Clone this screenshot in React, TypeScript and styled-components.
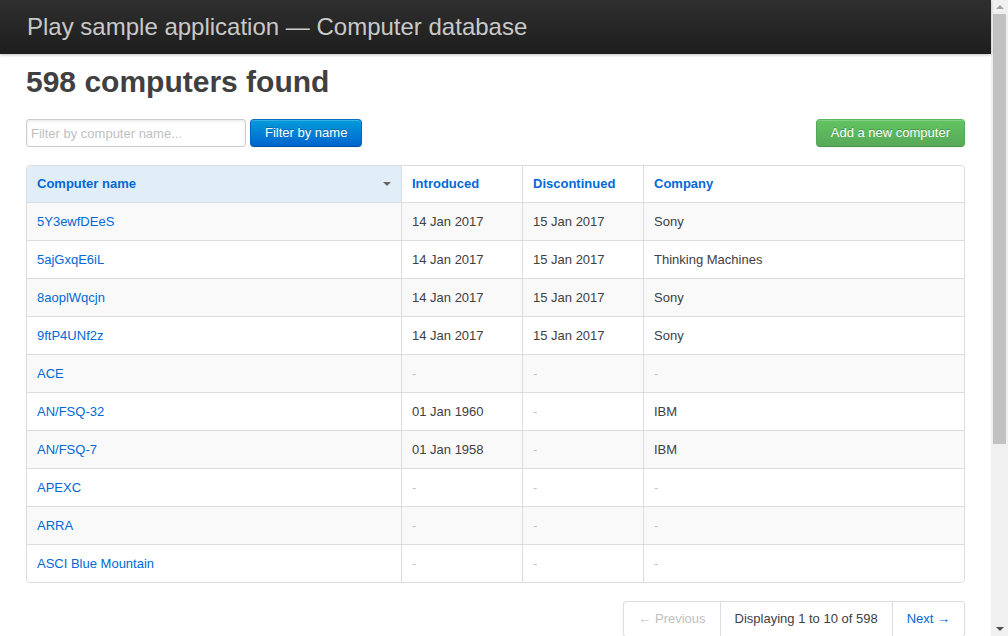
import React from "react";
import styled, { createGlobalStyle } from "styled-components";

const Global = createGlobalStyle`
  html, body { margin: 0; padding: 0; overflow: hidden; }
  body { font-family: "Liberation Sans", Arial, Helvetica, sans-serif; font-size: 13px; line-height: 18px; color: #404040; background: #fff; }
`;

const Viewport = styled.div`
  display: flex;
  height: 636px;
  overflow: hidden;
`;

const Page = styled.div`
  flex: 1;
  min-width: 0;
`;

const ScrollBar = styled.div`
  width: 17px;
  flex: none;
  background: #f0f0f0;
  display: flex;
  flex-direction: column;
  align-items: center;
`;

const ScrollButton = styled.div`
  height: 14px;
  width: 17px;
  display: flex;
  align-items: center;
  justify-content: center;
`;

const ArrowUp = styled.span`
  width: 0;
  height: 0;
  border-left: 4px solid transparent;
  border-right: 4px solid transparent;
  border-bottom: 4px solid #a3a3a3;
`;

const ArrowDown = styled.span`
  width: 0;
  height: 0;
  border-left: 4px solid transparent;
  border-right: 4px solid transparent;
  border-top: 4px solid #505050;
`;

const Track = styled.div`
  flex: 1;
  width: 100%;
  display: flex;
  justify-content: center;
`;

const Thumb = styled.div`
  width: 13px;
  height: 430px;
  background: #c1c1c1;
`;

const TopBar = styled.header`
  height: 54px;
  background: linear-gradient(to bottom, #2f2f2f, #1d1d1d);
  box-shadow: 0 1px 3px rgba(0, 0, 0, 0.25);
  position: relative;
`;

const Brand = styled.h1`
  margin: 0;
  padding: 0 27px;
  font-size: 24px;
  line-height: 54px;
  font-weight: normal;
  color: #c9c9c9;
`;

const Main = styled.section`
  padding: 10px 26px 0 26px;
`;

const Title = styled.h1`
  margin: 0 0 19px;
  font-size: 30px;
  line-height: 36px;
  font-weight: bold;
  color: #404040;
`;

const Actions = styled.div`
  display: flex;
  align-items: flex-start;
  gap: 4px;
  margin-bottom: 18px;
`;

const SearchInput = styled.input`
  box-sizing: border-box;
  width: 220px;
  height: 28px;
  padding: 4px;
  font-family: inherit;
  font-size: 13px;
  line-height: 18px;
  color: #808080;
  border: 1px solid #ccc;
  border-radius: 3px;
  box-shadow: inset 0 1px 3px rgba(0, 0, 0, 0.1);
  outline: none;
  &::placeholder { color: #bfbfbf; }
`;

const Button = styled.button<{ $variant: "primary" | "success" }>`
  box-sizing: border-box;
  height: 28px;
  padding: 0 14px;
  font-family: inherit;
  font-size: 13px;
  line-height: 26px;
  color: #fff;
  border-radius: 4px;
  border-width: 1px;
  border-style: solid;
  border-color: ${(p) => (p.$variant === "primary" ? "#0a6fc9 #0064cd #0052a8" : "#5cb65c #57a957 #4a934a")};
  text-shadow: 0 -1px 0 rgba(0, 0, 0, 0.25);
  box-shadow: inset 0 1px 0 rgba(255, 255, 255, 0.2), 0 1px 2px rgba(0, 0, 0, 0.05);
  cursor: pointer;
  background: ${(p) =>
    p.$variant === "primary"
      ? "linear-gradient(to bottom, #049cdb, #0064cd)"
      : "linear-gradient(to bottom, #62c462, #57a957)"};
`;

const Spacer = styled.div`
  flex: 1;
`;

const Table = styled.table`
  width: 100%;
  table-layout: fixed;
  border-collapse: separate;
  border-spacing: 0;
  border: 1px solid #ddd;
  border-radius: 4px;
`;

const Th = styled.th<{ $sorted?: boolean }>`
  text-align: left;
  font-weight: bold;
  padding: 9px 10px;
  line-height: 18px;
  background: ${(p) => (p.$sorted ? "#e1eef7" : "transparent")};
  position: relative;
  & + & { border-left: 1px solid #ddd; }
  &:first-child { border-top-left-radius: 4px; }
`;

const HeadLink = styled.a`
  color: #0069d6;
  text-decoration: none;
`;

const SortArrow = styled.span`
  position: absolute;
  right: 10px;
  top: 16px;
  width: 0;
  height: 0;
  border-left: 4px solid transparent;
  border-right: 4px solid transparent;
  border-top: 4px solid #666;
`;

const Row = styled.tr<{ $striped: boolean }>`
  background: ${(p) => (p.$striped ? "#f9f9f9" : "#fff")};
  &:last-child td:first-child { border-bottom-left-radius: 4px; }
  &:last-child td:last-child { border-bottom-right-radius: 4px; }
`;

const Td = styled.td`
  padding: 10px 10px 9px;
  line-height: 18px;
  vertical-align: top;
  border-top: 1px solid #ddd;
  & + & { border-left: 1px solid #ddd; }
`;

const NameLink = styled.a`
  color: #0069d6;
  text-decoration: none;
`;

const Empty = styled.em`
  font-style: normal;
  color: #c4c4c4;
`;

const PaginationWrap = styled.div`
  display: flex;
  justify-content: flex-end;
  margin: 18px 0;
`;

const Pager = styled.ul`
  display: flex;
  margin: 0;
  padding: 0;
  list-style: none;
  border: 1px solid #ddd;
  border-radius: 3px;
  box-shadow: 0 1px 2px rgba(0, 0, 0, 0.05);
`;

const PageItem = styled.li<{ $tone: "disabled" | "current" | "link" }>`
  padding: 0 14px;
  line-height: 34px;
  color: ${(p) => (p.$tone === "disabled" ? "#bfbfbf" : p.$tone === "current" ? "#404040" : "#0069d6")};
  & + & { border-left: 1px solid #ddd; }
`;

type Computer = { name: string; introduced: string; discontinued: string; company: string };

const computers: Computer[] = [
  { name: "5Y3ewfDEeS", introduced: "14 Jan 2017", discontinued: "15 Jan 2017", company: "Sony" },
  { name: "5ajGxqE6iL", introduced: "14 Jan 2017", discontinued: "15 Jan 2017", company: "Thinking Machines" },
  { name: "8aoplWqcjn", introduced: "14 Jan 2017", discontinued: "15 Jan 2017", company: "Sony" },
  { name: "9ftP4UNf2z", introduced: "14 Jan 2017", discontinued: "15 Jan 2017", company: "Sony" },
  { name: "ACE", introduced: "", discontinued: "", company: "" },
  { name: "AN/FSQ-32", introduced: "01 Jan 1960", discontinued: "", company: "IBM" },
  { name: "AN/FSQ-7", introduced: "01 Jan 1958", discontinued: "", company: "IBM" },
  { name: "APEXC", introduced: "", discontinued: "", company: "" },
  { name: "ARRA", introduced: "", discontinued: "", company: "" },
  { name: "ASCI Blue Mountain", introduced: "", discontinued: "", company: "" },
];

const Cell = ({ value }: { value: string }) => <Td>{value ? value : <Empty>-</Empty>}</Td>;

export default function App() {
  return (
    <>
      <Global />
      <Viewport>
        <Page>
          <TopBar>
            <Brand>Play sample application — Computer database</Brand>
          </TopBar>
          <Main>
            <Title>598 computers found</Title>
            <Actions>
              <SearchInput placeholder="Filter by computer name..." />
              <Button $variant="primary">Filter by name</Button>
              <Spacer />
              <Button $variant="success">Add a new computer</Button>
            </Actions>
            <Table>
              <colgroup>
                <col style={{ width: 374 }} />
                <col style={{ width: 121 }} />
                <col style={{ width: 121 }} />
                <col />
              </colgroup>
              <thead>
                <tr>
                  <Th $sorted>
                    <HeadLink href="#">Computer name</HeadLink>
                    <SortArrow />
                  </Th>
                  <Th><HeadLink href="#">Introduced</HeadLink></Th>
                  <Th><HeadLink href="#">Discontinued</HeadLink></Th>
                  <Th><HeadLink href="#">Company</HeadLink></Th>
                </tr>
              </thead>
              <tbody>
                {computers.map((c, i) => (
                  <Row key={c.name} $striped={i % 2 === 0}>
                    <Td><NameLink href="#">{c.name}</NameLink></Td>
                    <Cell value={c.introduced} />
                    <Cell value={c.discontinued} />
                    <Cell value={c.company} />
                  </Row>
                ))}
              </tbody>
            </Table>
            <PaginationWrap>
              <Pager>
                <PageItem $tone="disabled">← Previous</PageItem>
                <PageItem $tone="current">Displaying 1 to 10 of 598</PageItem>
                <PageItem $tone="link">Next →</PageItem>
              </Pager>
            </PaginationWrap>
          </Main>
        </Page>
        <ScrollBar>
          <ScrollButton><ArrowUp /></ScrollButton>
          <Track><Thumb /></Track>
          <ScrollButton><ArrowDown /></ScrollButton>
        </ScrollBar>
      </Viewport>
    </>
  );
}
